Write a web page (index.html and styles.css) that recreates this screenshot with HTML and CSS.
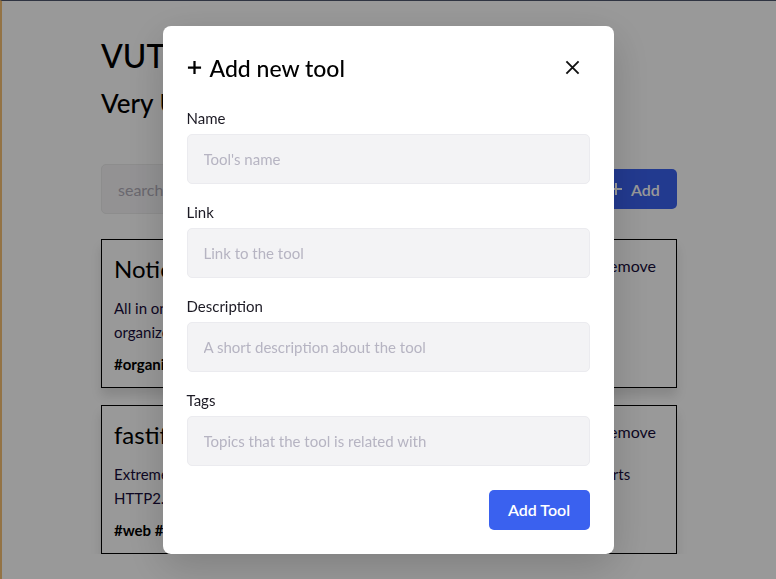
FILE: index.html
```html
<!DOCTYPE html>
<html lang="en">
<head>
<meta charset="utf-8">
<title>VUTTR</title>
<link rel="stylesheet" href="styles.css">
</head>
<body>
<div class="page">
  <header class="page-header">
    <h1 class="title">VUTTR</h1>
    <h2 class="subtitle">Very Useful Tools to Remember</h2>
  </header>
  <div class="toolbar">
    <input class="search" type="text" placeholder="search">
    <button class="add-btn" type="button">
      <svg class="add-icon" viewBox="0 0 14 14" width="14" height="14"><path d="M7 1v12M1 7h12" stroke="currentColor" stroke-width="2" fill="none"/></svg>
      <span>Add</span>
    </button>
  </div>
  <ul class="tools">
    <li class="card">
      <div class="card-head">
        <h3 class="card-title">Notion</h3>
        <span class="remove">remove</span>
      </div>
      <p class="card-desc">All in one tool to organize teams and ideas. Write, plan, collaborate, and get organized.</p>
      <p class="card-tags">#organization #planning #collaboration #writing #calendar</p>
    </li>
    <li class="card">
      <div class="card-head">
        <h3 class="card-title">fastify</h3>
        <span class="remove">remove</span>
      </div>
      <p class="card-desc">Extremely fast and simple, low-overhead web framework for NodeJS. Supports HTTP2.</p>
      <p class="card-tags">#web #framework #node #http2 #https #localhost</p>
    </li>
  </ul>
</div>

<div class="overlay">
  <div class="modal">
    <div class="modal-head">
      <h2 class="modal-title">
        <svg class="plus" viewBox="0 0 16 16" width="16" height="16"><path d="M8 1v14M1 8h14" stroke="currentColor" stroke-width="2.4" fill="none"/></svg>
        <span>Add new tool</span>
      </h2>
      <button class="close" type="button" aria-label="close">
        <svg viewBox="0 0 16 16" width="16" height="16"><path d="M1.5 1.5l13 13M14.5 1.5l-13 13" stroke="currentColor" stroke-width="2" fill="none"/></svg>
      </button>
    </div>
    <form class="form">
      <div class="field">
        <label class="label" for="f-name">Name</label>
        <input class="input" id="f-name" type="text" placeholder="Tool's name">
      </div>
      <div class="field">
        <label class="label" for="f-link">Link</label>
        <input class="input" id="f-link" type="text" placeholder="Link to the tool">
      </div>
      <div class="field">
        <label class="label" for="f-desc">Description</label>
        <input class="input" id="f-desc" type="text" placeholder="A short description about the tool">
      </div>
      <div class="field">
        <label class="label" for="f-tags">Tags</label>
        <input class="input" id="f-tags" type="text" placeholder="Topics that the tool is related with">
      </div>
      <div class="actions">
        <button class="submit" type="button">Add Tool</button>
      </div>
    </form>
  </div>
</div>
</body>
</html>
```
FILE: styles.css
```css
* { box-sizing: border-box; }

html {
  border-top: 1px solid #4f586e;
  border-left: 2px solid #f5c073;
  min-height: 100%;
}

body {
  margin: 0;
  font-family: Lato, "Liberation Sans", sans-serif;
  color: #170c3a;
  background: #fff;
}

.page {
  width: 576px;
  margin: 0 auto;
  padding-top: 35px;
}

.title {
  margin: 0;
  font-size: 32px;
  font-weight: 500;
  line-height: 40px;
  color: #000;
}

.subtitle {
  margin: 11px 0 0;
  font-size: 26px;
  font-weight: 500;
  line-height: 32px;
  color: #000;
}

.toolbar {
  margin-top: 45px;
  display: flex;
  align-items: center;
  justify-content: space-between;
}

.search {
  width: 320px;
  height: 50px;
  padding: 0 16px;
  border: 1px solid #ebebeb;
  border-radius: 5px;
  background: #f5f4f6;
  font: 16px Lato, sans-serif;
}
.search::placeholder { color: #b1adb9; }

.add-btn {
  display: flex;
  align-items: center;
  gap: 8px;
  width: 77px;
  height: 40px;
  padding: 0 0 0 9px;
  border: 0;
  border-radius: 5px;
  background: #3a61ef;
  color: #fff;
  font: 600 16px Lato, sans-serif;
}

.tools {
  list-style: none;
  margin: 25px 0 0;
  padding: 0;
  display: flex;
  flex-direction: column;
  gap: 17px;
}

.card {
  border: 1px solid #000;
  padding: 14px 20px 11px 12px;
  box-shadow: 0 8px 10px rgba(0, 0, 0, 0.12);
}

.card-head {
  display: flex;
  justify-content: space-between;
  align-items: flex-start;
}

.card-title {
  margin: 0;
  font-size: 24px;
  font-weight: 400;
  line-height: 30px;
  color: #000;
}

.remove {
  margin-top: 0;
  font-size: 16px;
  line-height: 24px;
  color: #170c3a;
}

.card-desc {
  margin: 12px 0 0;
  font-size: 15px;
  line-height: 24px;
  color: #170c3a;
}

.card-tags {
  margin: 8px 0 0;
  font-size: 15px;
  font-weight: 700;
  line-height: 24px;
  color: #000;
}

.overlay {
  position: fixed;
  inset: 0;
  background: rgba(0, 0, 0, 0.4);
  display: flex;
  align-items: center;
  justify-content: center;
}

.modal {
  width: 451px;
  padding: 24px;
  background: #fff;
  border-radius: 8px;
  box-shadow: 0 12px 40px rgba(0, 0, 0, 0.18);
}

.modal-head {
  display: flex;
  justify-content: space-between;
  align-items: center;
  height: 36px;
  margin-bottom: 22px;
}

.modal-title {
  margin: 0;
  display: flex;
  align-items: center;
  gap: 8px;
  font-size: 23px;
  font-weight: 500;
  color: #000;
}

.plus { width: 15px; height: 15px; }

.close {
  width: 36px;
  height: 36px;
  margin-right: -1px;
  padding: 0;
  border: 0;
  background: none;
  color: #111;
  display: flex;
  align-items: center;
  justify-content: center;
}
.close svg { width: 15px; height: 15px; }

.form {
  display: flex;
  flex-direction: column;
  gap: 18px;
}

.field {
  display: flex;
  flex-direction: column;
  gap: 6px;
}

.label {
  font-size: 15px;
  line-height: 20px;
  color: #1c1a24;
}

.input {
  height: 50px;
  padding: 0 16px;
  border: 1px solid #ebebef;
  border-radius: 5px;
  background: #f3f3f5;
  font: 15px Lato, sans-serif;
  color: #170c3a;
}
.input::placeholder { color: #b6b4c2; }

.actions {
  display: flex;
  justify-content: flex-end;
  margin-top: 6px;
}

.submit {
  width: 101px;
  height: 40px;
  border: 0;
  border-radius: 5px;
  background: #3a61ef;
  color: #fff;
  font: 600 16px Lato, sans-serif;
}
```
